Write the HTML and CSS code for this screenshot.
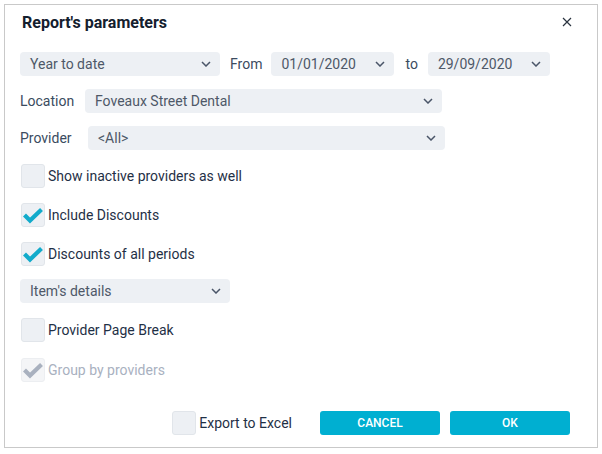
FILE: index.html
```html
<!DOCTYPE html>
<html>
<head>
<meta charset="utf-8">
<link rel="stylesheet" href="styles.css">
</head>
<body>
<div class="dialog">
  <div class="header">
    <div class="title">Report's parameters</div>
    <div class="close"><svg width="10" height="10" viewBox="0 0 10 10"><path d="M1 1L9 9M9 1L1 9" stroke="#2b3440" stroke-width="1.2" fill="none"/></svg></div>
  </div>
  <div class="row r1">
    <div class="select w-period"><span>Year to date</span><svg class="chev" width="10" height="6" viewBox="0 0 10 6"><path d="M1 1L5 5L9 1" stroke="#4a5568" stroke-width="1.5" fill="none"/></svg></div>
    <span class="lbl from">From</span>
    <div class="select w-date1"><span>01/01/2020</span><svg class="chev" width="10" height="6" viewBox="0 0 10 6"><path d="M1 1L5 5L9 1" stroke="#4a5568" stroke-width="1.5" fill="none"/></svg></div>
    <span class="lbl to">to</span>
    <div class="select w-date2"><span>29/09/2020</span><svg class="chev" width="10" height="6" viewBox="0 0 10 6"><path d="M1 1L5 5L9 1" stroke="#4a5568" stroke-width="1.5" fill="none"/></svg></div>
  </div>
  <div class="row r2">
    <span class="lbl loc">Location</span>
    <div class="select w-wide"><span>Foveaux Street Dental</span><svg class="chev" width="10" height="6" viewBox="0 0 10 6"><path d="M1 1L5 5L9 1" stroke="#4a5568" stroke-width="1.5" fill="none"/></svg></div>
  </div>
  <div class="row r3">
    <span class="lbl prov">Provider</span>
    <div class="select w-wide"><span>&lt;All&gt;</span><svg class="chev" width="10" height="6" viewBox="0 0 10 6"><path d="M1 1L5 5L9 1" stroke="#4a5568" stroke-width="1.5" fill="none"/></svg></div>
  </div>
  <div class="check c1"><span class="box"></span><span>Show inactive providers as well</span></div>
  <div class="check c2"><span class="box"><svg width="22" height="18" viewBox="0 0 22 18"><path d="M2.5 9L8 14.5L19.5 3.5" stroke="#12abcb" stroke-width="4.2" fill="none"/></svg></span><span>Include Discounts</span></div>
  <div class="check c3"><span class="box"><svg width="22" height="18" viewBox="0 0 22 18"><path d="M2.5 9L8 14.5L19.5 3.5" stroke="#12abcb" stroke-width="4.2" fill="none"/></svg></span><span>Discounts of all periods</span></div>
  <div class="row r4">
    <div class="select w-item"><span>Item's details</span><svg class="chev" width="10" height="6" viewBox="0 0 10 6"><path d="M1 1L5 5L9 1" stroke="#4a5568" stroke-width="1.5" fill="none"/></svg></div>
  </div>
  <div class="check c4"><span class="box"></span><span>Provider Page Break</span></div>
  <div class="check c5 disabled"><span class="box"><svg width="22" height="18" viewBox="0 0 22 18"><path d="M2.5 9L8 14.5L19.5 3.5" stroke="#a9b1bf" stroke-width="4.2" fill="none"/></svg></span><span>Group by providers</span></div>
  <div class="footer">
    <div class="check export"><span class="box"></span><span>Export to Excel</span></div>
    <button class="btn cancel">CANCEL</button>
    <button class="btn ok">OK</button>
  </div>
</div>
</body>
</html>
```
FILE: styles.css
```css
* { box-sizing: border-box; }
html, body { margin: 0; padding: 0; background: #fff; }
body {
  font-family: Roboto, "Liberation Sans", sans-serif;
  font-size: 14px;
  color: #1f3046;
}
.dialog {
  margin: 4px 0 0 4px;
  width: 594px;
  height: 444px;
  border: 1px solid #c9c9c9;
  background: #fff;
  padding: 0 15px;
}
.header {
  display: flex;
  justify-content: space-between;
  align-items: center;
  height: 33px;
  padding-left: 2px;
}
.title {
  font-size: 16px;
  font-weight: 700;
  color: #14202e;
  padding-top: 1px;
}
.close { width: 10px; height: 10px; margin-right: 10px; display: flex; }
.row { display: flex; align-items: center; }
.r1 { margin-top: 14px; }
.r2 { margin-top: 13px; }
.r3 { margin-top: 13px; }
.r4 { margin-top: 13px; }
.select {
  height: 24px;
  background: #edf0f4;
  border-radius: 4px;
  display: flex;
  align-items: center;
  justify-content: space-between;
  padding: 0 9px 0 10px;
  color: #4e5868;
}
.chev { flex: none; }
.w-period { width: 200px; }
.w-date1 { width: 123px; }
.w-date2 { width: 122px; }
.w-wide { width: 357px; }
.w-item { width: 210px; }
.lbl { color: #3b4b60; }
.from { margin: 0 9px 0 10px; }
.to { margin: 0 10px 0 11px; }
.loc { width: 65px; }
.prov { width: 68px; }
.check {
  display: flex;
  align-items: center;
  gap: 3px;
  color: #1f3046;
}
.box {
  width: 24px;
  height: 24px;
  border-radius: 3px;
  background: #edf0f4;
  border: 1px solid #e1e5ea;
  display: flex;
  align-items: center;
  justify-content: center;
  margin-left: 1px;
}
.c1 { margin-top: 14px; }
.c2 { margin-top: 15px; }
.c3 { margin-top: 15px; }
.c4 { margin-top: 15px; }
.c5 { margin-top: 16px; }
.disabled { color: #a9b1bf; }
.disabled .box { background: #f4f5f7; border-color: #eceef1; }
.footer {
  margin-top: 29px;
  display: flex;
  align-items: center;
  justify-content: flex-end;
  padding-right: 12px;
}
.export { margin-right: 28px; }
.btn {
  height: 24px;
  width: 120px;
  border: none;
  border-radius: 3px;
  background: #00afd1;
  color: #fff;
  font-family: Roboto, "Liberation Sans", sans-serif;
  font-size: 12px;
  font-weight: 500;
  padding: 0;
}
.ok { margin-left: 10px; }
```
